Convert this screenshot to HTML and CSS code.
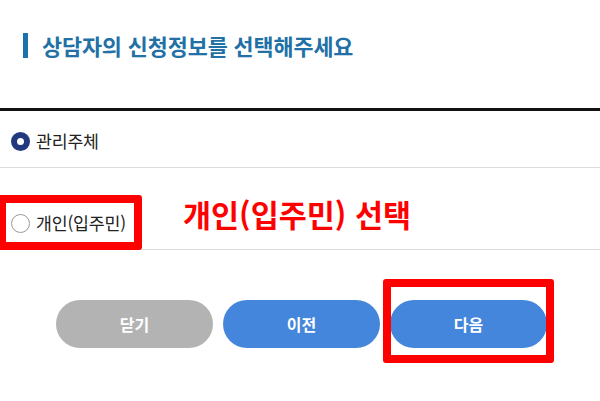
FILE: index.html
```html
<!DOCTYPE html>
<html lang="ko">
<head>
<meta charset="utf-8">
<link rel="stylesheet" href="styles.css">
</head>
<body>
<div class="page">
  <h2 class="page-title">상담자의 신청정보를 선택해주세요</h2>
  <div class="options">
    <label class="option option-first">
      <span class="radio radio-checked"></span>
      <span class="option-label">관리주체</span>
    </label>
    <label class="option option-second">
      <span class="radio"></span>
      <span class="option-label">개인(입주민)</span>
    </label>
  </div>
  <div class="buttons">
    <button class="btn btn-gray">닫기</button>
    <button class="btn btn-blue">이전</button>
    <button class="btn btn-blue">다음</button>
  </div>
  <div class="mark mark-option"></div>
  <div class="mark mark-next"></div>
  <div class="note">개인(입주민) 선택</div>
</div>
</body>
</html>
```
FILE: styles.css
```css
html, body {
  margin: 0;
  padding: 0;
  background: #fff;
}
body {
  font-family: "Noto Sans CJK KR", "Noto Sans", sans-serif;
  color: #222;
}
.page {
  position: relative;
  width: 600px;
  height: 401px;
  overflow: hidden;
}
.page-title {
  margin: 33px 0 50px 23px;
  height: 25px;
  border-left: 5px solid #1a72ad;
  padding-left: 14px;
  font-size: 21.8px;
  line-height: 25px;
  font-weight: 700;
  color: #2170a6;
  letter-spacing: -0.1px;
}
.options {
  border-top: 3px solid #111;
}
.option {
  display: flex;
  align-items: center;
  box-sizing: border-box;
  padding-left: 11px;
  border-bottom: 1px solid #dcdcdc;
}
.option-first {
  height: 57px;
  padding-top: 4px;
}
.option-second {
  height: 82px;
  padding-top: 29px;
}
.radio {
  width: 19px;
  height: 19px;
  box-sizing: border-box;
  border-radius: 50%;
  border: 1px solid #9a9a9a;
  background: #fff;
  margin-right: 6px;
  flex: none;
}
.radio-checked {
  border: 6px solid #22397f;
}
.option-label {
  font-size: 17.3px;
  line-height: 20px;
  color: #222;
  letter-spacing: -0.2px;
}
.buttons {
  display: flex;
  gap: 10px;
  margin-top: 50px;
  padding-left: 56px;
}
.btn {
  width: 157px;
  height: 48px;
  border: none;
  border-radius: 24px;
  font-family: "Noto Sans CJK KR", "Noto Sans", sans-serif;
  font-size: 16px;
  font-weight: 700;
  color: #fff;
  padding: 0;
}
.btn-gray {
  background: #b3b3b3;
}
.btn-blue {
  background: #4386dc;
}
.mark {
  position: absolute;
  border: 8px solid #f00;
  border-radius: 3px;
  box-sizing: border-box;
}
.mark-option {
  left: -2px;
  top: 195px;
  width: 144px;
  height: 55px;
}
.mark-next {
  left: 383px;
  top: 279px;
  width: 171px;
  height: 84px;
}
.note {
  position: absolute;
  left: 183px;
  top: 194px;
  font-size: 30.5px;
  line-height: 40px;
  font-weight: 700;
  color: #f00;
  white-space: nowrap;
}
```
